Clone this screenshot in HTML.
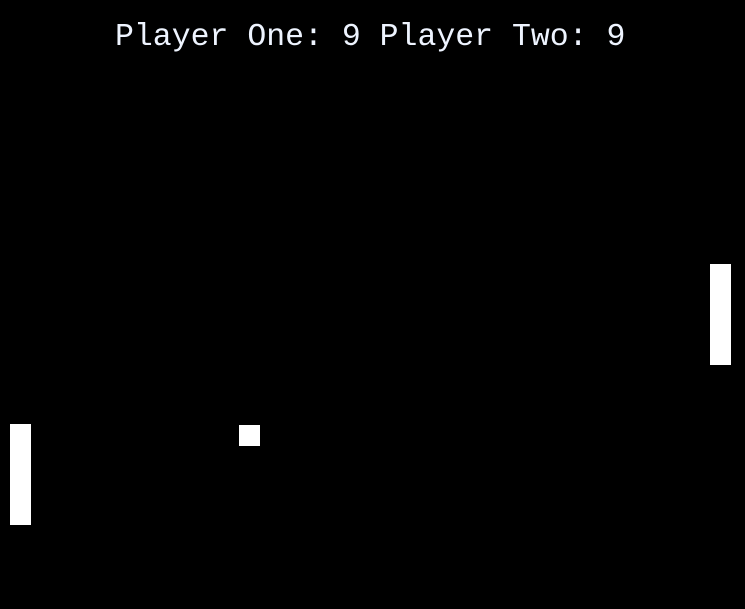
<!DOCTYPE html>
<html><head><style>
html,body{margin:0;padding:0;background:#000;width:745px;height:609px;overflow:hidden;position:relative}
.t{position:absolute;left:115px;top:22px;font:31.5px/1 "Liberation Mono",monospace;color:#eef4ff;white-space:pre;font-weight:300}
.r{position:absolute;background:#fff}
</style></head><body>
<div class="t">Player One: 9 Player Two: 9</div>
<div class="r" style="left:10px;top:424px;width:21px;height:101px"></div>
<div class="r" style="left:710px;top:264px;width:21px;height:101px"></div>
<div class="r" style="left:239px;top:425px;width:21px;height:21px"></div>
</body></html>
